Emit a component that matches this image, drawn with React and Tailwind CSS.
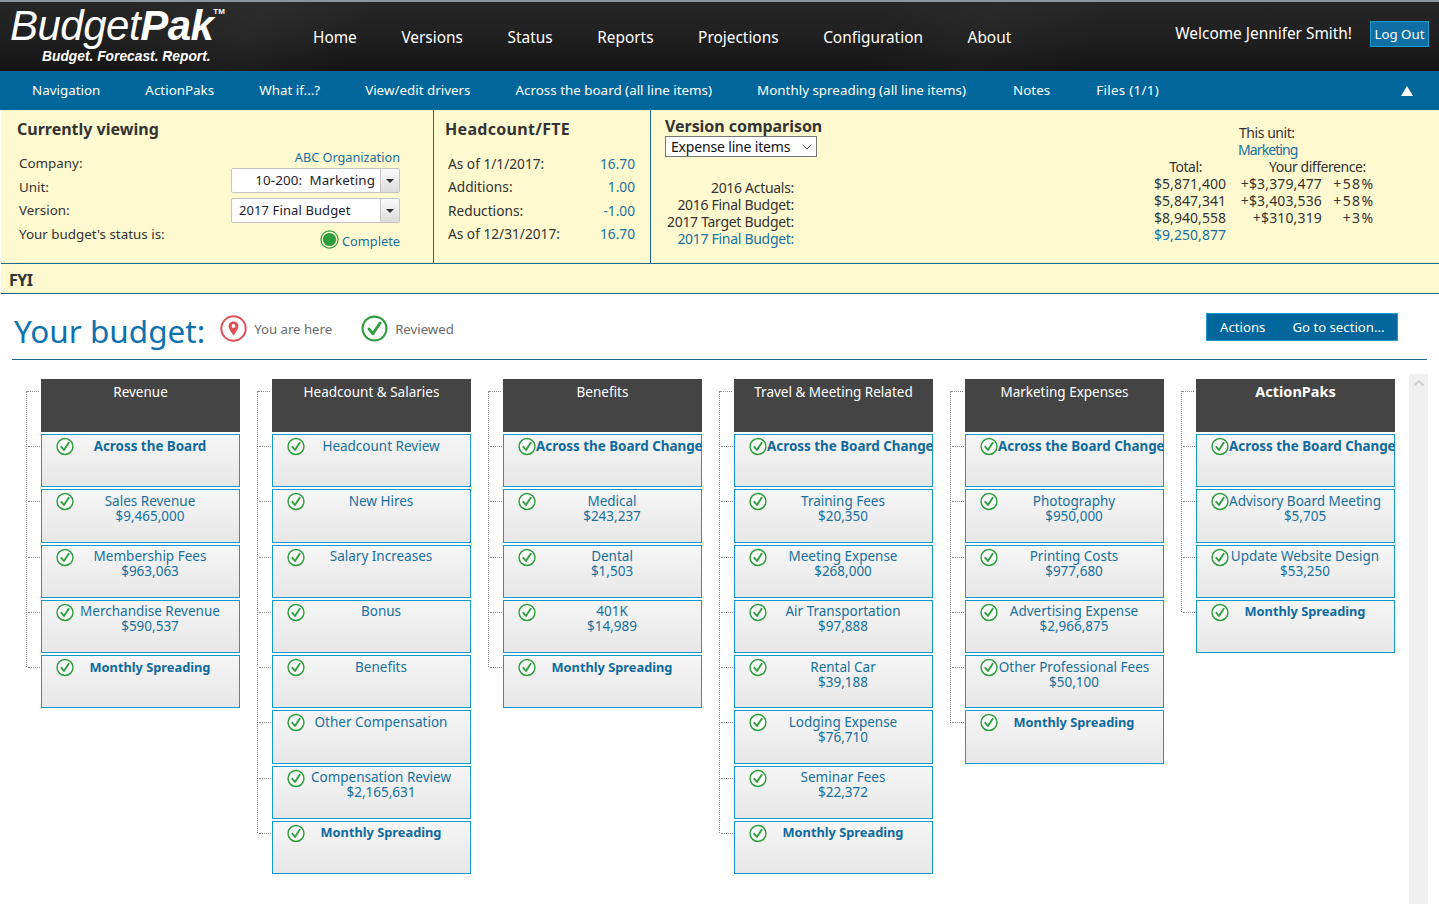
import React from "react";

const FONT = "font-['Noto_Sans','Open_Sans','Liberation_Sans',sans-serif]";

function Check({ className = "" }) {
  return (
    <svg viewBox="0 0 19 19" className={className} fill="none">
      <circle cx="9.5" cy="9.5" r="8.4" stroke="#2e9e3e" strokeWidth="1.5" fill="#fbfbfb" />
      <path d="M5.6 9.8 L8.4 13.2 L13.4 5.6" stroke="#2e9e3e" strokeWidth="2" strokeLinecap="round" strokeLinejoin="round" />
    </svg>
  );
}

function Pin({ className = "" }) {
  return (
    <svg viewBox="0 0 27 27" className={className} fill="none">
      <circle cx="13.5" cy="13.5" r="12.2" stroke="#de4f56" strokeWidth="2" fill="#fff" />
      <path d="M13.5 6.4 C10.4 6.4 8.6 8.6 8.6 11.1 C8.6 14.4 13.5 20.6 13.5 20.6 C13.5 20.6 18.4 14.4 18.4 11.1 C18.4 8.6 16.6 6.4 13.5 6.4 Z" fill="#de4f56" />
      <circle cx="13.5" cy="11" r="1.9" fill="#fff" />
    </svg>
  );
}

const columns = [
  {
    title: "Revenue",
    cards: [
      ["Across the Board", "", true],
      ["Sales Revenue", "$9,465,000"],
      ["Membership Fees", "$963,063"],
      ["Merchandise Revenue", "$590,537"],
      ["Monthly Spreading", "", true],
    ],
  },
  {
    title: "Headcount & Salaries",
    cards: [
      ["Headcount Review", ""],
      ["New Hires", ""],
      ["Salary Increases", ""],
      ["Bonus", ""],
      ["Benefits", ""],
      ["Other Compensation", ""],
      ["Compensation Review", "$2,165,631"],
      ["Monthly Spreading", "", true],
    ],
  },
  {
    title: "Benefits",
    cards: [
      ["Across the Board Change", "", true],
      ["Medical", "$243,237"],
      ["Dental", "$1,503"],
      ["401K", "$14,989"],
      ["Monthly Spreading", "", true],
    ],
  },
  {
    title: "Travel & Meeting Related",
    cards: [
      ["Across the Board Change", "", true],
      ["Training Fees", "$20,350"],
      ["Meeting Expense", "$268,000"],
      ["Air Transportation", "$97,888"],
      ["Rental Car", "$39,188"],
      ["Lodging Expense", "$76,710"],
      ["Seminar Fees", "$22,372"],
      ["Monthly Spreading", "", true],
    ],
  },
  {
    title: "Marketing Expenses",
    cards: [
      ["Across the Board Change", "", true],
      ["Photography", "$950,000"],
      ["Printing Costs", "$977,680"],
      ["Advertising Expense", "$2,966,875"],
      ["Other Professional Fees", "$50,100"],
      ["Monthly Spreading", "", true],
    ],
  },
  {
    title: "ActionPaks",
    boldTitle: true,
    cards: [
      ["Across the Board Change", "", true],
      ["Advisory Board Meeting", "$5,705"],
      ["Update Website Design", "$53,250"],
      ["Monthly Spreading", "", true],
    ],
  },
];

const nav = ["Home", "Versions", "Status", "Reports", "Projections", "Configuration", "About"];
const sub = [
  ["Navigation", ""],
  ["ActionPaks", ""],
  ["What if...?", ""],
  ["View/edit drivers", ""],
  ["Across the board (all line items)", ""],
  ["Monthly spreading (all line items)", ""],
  ["Notes", "ml-[2px]"],
  ["Files (1/1)", "ml-[1px] tracking-[0.3px]"],
];

function Stub({ top }) {
  return <span className={`absolute left-[-14px] w-[12px] border-t border-dotted border-[#8f8f8f] ${top}`} />;
}

function Card({ name, value, bold }) {
  const boldSize = name.startsWith("Across") ? "text-[13.4px]" : "text-[12.8px]";
  return (
    <div className="relative flex h-[53.25px] shrink-0 border border-[#0f9bcf] bg-gradient-to-b from-[#f6f6f6] to-[#e7e7e7]">
      <Stub top="top-[11px]" />
      <Check className="mt-[2px] ml-[14px] h-[19px] w-[18px] shrink-0" />
      <div className="mt-[3.5px] w-[152px] whitespace-nowrap text-center text-[13.5px] leading-[15px] text-[#17709f]">
        <div className={bold ? `${boldSize} font-bold text-[#0e6a9f]` : ""}>{name}</div>
        {value && <div>{value}</div>}
      </div>
    </div>
  );
}

function Column({ title, boldTitle, cards }) {
  return (
    <div className="relative flex w-[199px] shrink-0 flex-col gap-[2px]">
      <span className="absolute top-[12px] bottom-[41px] left-[-15px] border-l border-dotted border-[#8f8f8f]" />
      <div className="relative h-[53px] bg-[#444444] pt-[4px] text-center text-[13.5px] leading-[18px] text-white">
        <Stub top="top-[12px]" />
        <span className={boldTitle ? "mt-[-1px] block text-[14.5px] font-bold" : ""}>{title}</span>
      </div>
      {cards.map(([n, v, b]) => (
        <Card key={n} name={n} value={v} bold={b} />
      ))}
    </div>
  );
}

function Dropdown({ value, align }) {
  return (
    <div className="flex h-[25px] w-[169px] overflow-hidden rounded-[2px] border border-[#c4c4c4] bg-white leading-[23px] tracking-[0.1px] text-[#1d1d2c]">
      <div className={`flex-1 whitespace-nowrap ${align}`}>{value}</div>
      <div className="flex w-[19px] items-center justify-center border-l border-[#c4c4c4] bg-gradient-to-b from-[#fbfbfb] to-[#dcdcdc]">
        <span className="h-0 w-0 border-x-[4px] border-t-[4px] border-x-transparent border-t-[#333]" />
      </div>
    </div>
  );
}

export default function App() {
  return (
    <div className={`${FONT} h-[904px] w-[1439px] overflow-hidden bg-white text-[14px] text-[#333]`}>
      {/* top bar */}
      <header className="flex h-[71px] border-t-[2px] border-[#8d949b] bg-[linear-gradient(115deg,transparent_8%,rgba(255,255,255,0.035)_18%,transparent_26%,transparent_60%,rgba(255,255,255,0.025)_68%,transparent_76%),linear-gradient(to_bottom,#262626,#202020,#141414)] text-white">
        <div className="w-[313px] shrink-0 pl-[10px]">
          <div className="flex items-start font-['Liberation_Sans',sans-serif] text-[42px] leading-[48px] italic">
            <span className="tracking-[-0.5px]">Budget</span>
            <span className="font-bold tracking-[-0.5px]">Pak</span>
            <span className="mt-[4px] text-[8px] leading-[12px] font-bold not-italic">TM</span>
          </div>
          <div className="mt-[-2px] pl-[32px] font-['Liberation_Sans',sans-serif] text-[13.8px] leading-[17px] font-bold italic">
            Budget. Forecast. Report.
          </div>
        </div>
        <nav className="flex flex-1 items-start gap-[44.6px] pt-[25px] text-[15.4px] leading-[22px]">
          {nav.map((n) => (
            <span key={n}>{n}</span>
          ))}
        </nav>
        <div className="flex items-start pt-[19px] pr-[10px]">
          <span className="mt-[3px] mr-[18px] text-[15.4px] leading-[20px]">Welcome Jennifer Smith!</span>
          <span className="h-[26px] w-[59px] border border-[#1b9ad0] bg-[#0f6fa5] text-center text-[13.3px] leading-[24px]">Log Out</span>
        </div>
      </header>

      {/* sub nav */}
      <div className="flex h-[39px] items-center bg-[#00669b] pr-[26px] pl-[32px] text-[13.4px] text-white">
        <div className="flex flex-1 gap-[45px]">
          {sub.map(([s, extra]) => (
            <span key={s} className={`whitespace-nowrap ${extra}`}>{s}</span>
          ))}
        </div>
        <span className="h-0 w-0 border-x-[6px] border-b-[10px] border-x-transparent border-b-white" />
      </div>

      {/* info panel */}
      <div className="ml-[1px] flex h-[154px] border-b border-[#1e6a8a] bg-[#fff9cf]">
        <section className="w-[433px] shrink-0 border-r border-[#1e6a8a] pt-[9px] pr-[33px] pl-[16px]">
          <h2 className="text-[16px] leading-[20px] font-bold text-[#333]">Currently viewing</h2>
          <div className="flex justify-between">
            <div className="mt-[13px] pl-[2px] text-[13.4px] leading-[23.5px]">
              <div>Company:</div>
              <div>Unit:</div>
              <div>Version:</div>
              <div>Your budget's status is:</div>
            </div>
            <div className="mt-[11px] flex flex-col items-end">
              <div className="h-[18px] text-[12.7px] leading-[15px] text-[#17709f]">ABC Organization</div>
              <Dropdown value="10-200:  Marketing" align="pr-[5px] text-right text-[13.4px] whitespace-pre" />
              <div className="mt-[5px]">
                <Dropdown value="2017 Final Budget" align="pl-[7px] text-[13px]" />
              </div>
              <div className="mt-[5px] flex items-center gap-[3px] text-[12.8px] text-[#17709f]">
                <svg viewBox="0 0 19 19" className="h-[19px] w-[19px]">
                  <circle cx="9.5" cy="9.5" r="8.6" fill="none" stroke="#2e9e3e" strokeWidth="1.2" />
                  <circle cx="9.5" cy="9.5" r="6.6" fill="#2e9e3e" />
                </svg>
                <span className="mt-[3px] leading-[20px]">Complete</span>
              </div>
            </div>
          </div>
        </section>

        <section className="w-[217px] shrink-0 border-r border-[#1e6a8a] pt-[9px] pr-[15px] pl-[11px]">
          <h2 className="text-[16px] leading-[20px] font-bold tracking-[0.3px]">Headcount/FTE</h2>
          <div className="mt-[13px] pl-[3px] text-[13.7px] leading-[23.4px]">
            {[
              ["As of 1/1/2017:", "16.70"],
              ["Additions:", "1.00"],
              ["Reductions:", "-1.00"],
              ["As of 12/31/2017:", "16.70"],
            ].map(([a, b]) => (
              <div key={a} className="flex justify-between">
                <span>{a}</span>
                <span className="text-[#17709f]">{b}</span>
              </div>
            ))}
          </div>
        </section>

        <section className="flex flex-1 pt-[7px] pl-[14px] tracking-[-0.45px]">
          <div className="w-[129px]">
            <h2 className="text-[16px] leading-[19px] font-bold tracking-[-0.05px] whitespace-nowrap">Version comparison</h2>
            <div className="flex h-[21px] w-[152px] items-center justify-between border border-[#777] bg-white pr-[4px] pl-[5px] text-[14px] tracking-[-0.17px] whitespace-nowrap text-[#111]">
              Expense line items
              <svg viewBox="0 0 10 6" className="h-[6px] w-[10px]" fill="none">
                <path d="M0.5 0.5 L5 5 L9.5 0.5" stroke="#555" />
              </svg>
            </div>
            <div className="mt-[22px] text-right leading-[17px] tracking-[-0.3px] whitespace-nowrap">
              <div>2016 Actuals:</div>
              <div>2016 Final Budget:</div>
              <div>2017 Target Budget:</div>
              <div className="text-[#17709f]">2017 Final Budget:</div>
            </div>
          </div>
          <div className="ml-[360px] grid h-fit grid-cols-[72px_96px_51px] pt-[7px] leading-[17px] whitespace-nowrap">
            <div />
            <div className="col-span-2 pl-[13px]">This unit:</div>
            <div />
            <div className="col-span-2 pl-[12px] tracking-[-0.9px] text-[#17709f]">Marketing</div>
            <div className="pr-[24px] text-right">Total:</div>
            <div className="col-span-2 pl-[43px]">Your difference:</div>
            <div className="text-right tracking-[0.05px]">$5,871,400</div>
            <div className="text-right tracking-[0.15px]">+$3,379,477</div>
            <div className="mr-[-1.5px] text-right tracking-[1.4px]">+58%</div>
            <div className="text-right tracking-[0.05px]">$5,847,341</div>
            <div className="text-right tracking-[0.15px]">+$3,403,536</div>
            <div className="mr-[-1.5px] text-right tracking-[1.4px]">+58%</div>
            <div className="text-right tracking-[0.05px]">$8,940,558</div>
            <div className="text-right tracking-[0.15px]">+$310,319</div>
            <div className="mr-[-1.5px] text-right tracking-[1.4px]">+3%</div>
            <div className="text-right tracking-[0.05px] text-[#17709f]">$9,250,877</div>
          </div>
        </section>
      </div>

      <div className="ml-[1px] h-[30px] border-b border-[#1e6a8a] bg-[#fff9cf] pl-[8px] text-[16px] leading-[32px] font-bold tracking-[-0.5px]">FYI</div>

      {/* title */}
      <div className="mx-[12px] flex h-[66px] items-start border-b border-[#1e6a8a] pt-[19px] pr-[29px] pl-[2px]">
        <h1 className="mr-[15px] text-[31.5px] leading-[35px] font-normal text-[#0d72ad]">Your budget:</h1>
        <Pin className="mt-[2px] h-[27px] w-[27px]" />
        <span className="mt-[7px] ml-[7px] text-[13.2px] leading-[18px] text-[#6a6a6a]">You are here</span>
        <Check className="mt-[2px] ml-[29px] h-[27px] w-[27px]" />
        <span className="mt-[7px] ml-[7px] flex-1 text-[13.2px] leading-[18px] text-[#6a6a6a]">Reviewed</span>
        <div className="flex h-[28px] w-[192px] border border-[#1b9ad0] bg-[#00669b] pl-[13px] text-[13.2px] leading-[26px] text-white">
          <span className="mr-[27px]">Actions</span>
          <span>Go to section...</span>
        </div>
      </div>

      {/* board */}
      <div className="flex items-start pt-[14px]">
        <div className="flex w-[1409px] shrink-0 items-start gap-[32px] pt-[5px] pl-[41px]">
          {columns.map((c) => (
            <Column key={c.title} {...c} />
          ))}
        </div>
        <div className="flex h-[530px] w-[19px] justify-center bg-[#f0f0f0] pt-[6px]">
          <svg viewBox="0 0 10 6" className="h-[6px] w-[10px]" fill="none">
            <path d="M0.5 5.5 L5 1 L9.5 5.5" stroke="#cfcfcf" strokeWidth="2" />
          </svg>
        </div>
      </div>
    </div>
  );
}
